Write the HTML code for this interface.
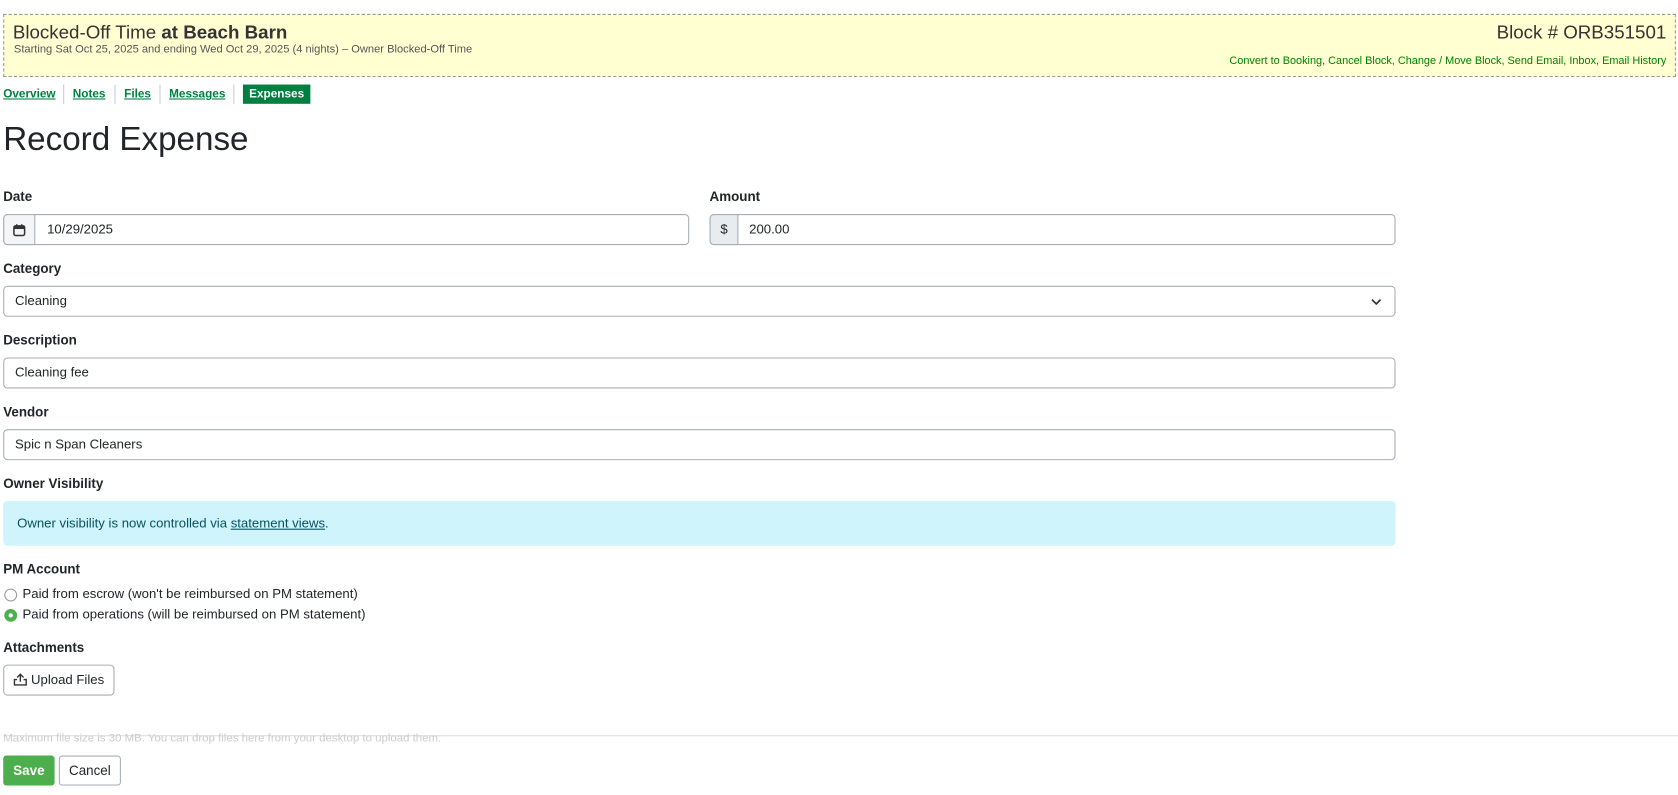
<!DOCTYPE html>
<html><head><meta charset="utf-8"><style>
html,body{margin:0;padding:0;background:#fff;overflow:hidden;width:1678px;height:795px}
#w{position:absolute;left:0;top:0;width:1568px;height:743px;transform:scale(1.0702);transform-origin:0 0;font-family:"Liberation Sans",Arial,sans-serif;color:#212529}
.a{position:absolute;white-space:nowrap}
.hdr{position:absolute;left:3px;top:13px;width:1561px;height:57px;background:#ffffd2;border:1px dashed #999}
.lbl{position:absolute;left:3px;font-size:12.5px;font-weight:bold;color:#212529}
.inp{position:absolute;box-sizing:border-box;border:1px solid #a7aeb8;border-radius:4px;background:#fff;font-size:12.3px;height:29px;line-height:27px;padding-left:10px}
.tab{position:absolute;top:82px;font-size:11px;font-weight:bold;color:#008040;text-decoration:underline}
.sep{position:absolute;top:79px;width:1px;height:18px;background:#ccc}
</style></head><body><div id="w">
<div class="hdr"></div>
<div class="a" style="left:12px;top:20px;font-size:17.5px;color:#333">Blocked-Off Time <b>at Beach Barn</b></div>
<div class="a" style="left:13px;top:41px;font-size:10.4px;color:#555">Starting Sat Oct 25, 2025 and ending Wed Oct 29, 2025 (4 nights) – Owner Blocked-Off Time</div>
<div class="a" style="right:11px;top:20px;font-size:17.5px;color:#333">Block # ORB351501</div>
<div class="a" style="right:11px;top:52px;font-size:10.2px;color:#008000">Convert to Booking, Cancel Block, Change / Move Block, Send Email, Inbox, Email History</div>
<div class="tab" style="left:3px">Overview</div><div class="sep" style="left:59px"></div>
<div class="tab" style="left:68px">Notes</div><div class="sep" style="left:107px"></div>
<div class="tab" style="left:116px">Files</div><div class="sep" style="left:149px"></div>
<div class="tab" style="left:158px">Messages</div><div class="sep" style="left:218px"></div>
<div class="a" style="left:227px;top:79px;width:63px;height:18px;background:#008040;color:#fff;font-size:11px;font-weight:bold;line-height:18px;text-align:center">Expenses</div>
<div class="a" style="left:3px;top:112px;font-size:31px;color:#212529">Record Expense</div>

<div class="lbl" style="top:177px">Date</div>
<div class="lbl" style="top:177px;left:663px">Amount</div>
<div class="inp" style="left:3px;top:200px;width:641px;padding-left:40px">10/29/2025</div>
<div class="a" style="left:3px;top:200px;width:30px;height:29px;box-sizing:border-box;border:1px solid #a7aeb8;border-radius:4px 0 0 4px;background:#f4f5f7">
<svg width="12" height="12" viewBox="0 0 12 12" style="position:absolute;left:8px;top:8px"><rect x="1" y="2" width="10" height="9" rx="1.5" fill="none" stroke="#333" stroke-width="1.4"/><rect x="1" y="2" width="10" height="3" fill="#333"/><rect x="3" y="0.5" width="1.3" height="2.5" fill="#333"/><rect x="7.7" y="0.5" width="1.3" height="2.5" fill="#333"/></svg></div>
<div class="inp" style="left:663px;top:200px;width:641px;padding-left:36px">200.00</div>
<div class="a" style="left:663px;top:200px;width:27px;height:29px;box-sizing:border-box;border:1px solid #a7aeb8;border-radius:4px 0 0 4px;background:#e9ecef;font-size:12.3px;line-height:27px;text-align:center">$</div>

<div class="lbl" style="top:244px">Category</div>
<div class="inp" style="left:3px;top:267px;width:1301px">Cleaning</div>
<svg class="a" style="left:1280px;top:277px" width="12" height="10" viewBox="0 0 12 10"><path d="M2 3l4 4 4-4" fill="none" stroke="#333" stroke-width="1.6"/></svg>
<div class="lbl" style="top:311px">Description</div>
<div class="inp" style="left:3px;top:334px;width:1301px">Cleaning fee</div>
<div class="lbl" style="top:378px">Vendor</div>
<div class="inp" style="left:3px;top:401px;width:1301px">Spic n Span Cleaners</div>
<div class="lbl" style="top:445px">Owner Visibility</div>
<div class="a" style="left:3px;top:468px;width:1301px;height:42px;background:#cff4fc;border-radius:4px"></div>
<div class="a" style="left:16px;top:482px;font-size:12.3px;color:#055160">Owner visibility is now controlled via <span style="text-decoration:underline">statement views</span>.</div>
<div class="lbl" style="top:525px">PM Account</div>
<div class="a" style="left:4px;top:550px;width:10px;height:10px;border:1px solid #999;border-radius:50%"></div>
<div class="a" style="left:21px;top:548px;font-size:12.3px">Paid from escrow (won't be reimbursed on PM statement)</div>
<div class="a" style="left:4px;top:569px;width:4px;height:4px;border:4px solid #4caf50;border-radius:50%;background:#fff"></div>
<div class="a" style="left:21px;top:567px;font-size:12.3px">Paid from operations (will be reimbursed on PM statement)</div>
<div class="lbl" style="top:598px">Attachments</div>
<div class="a" style="left:3px;top:621px;width:104px;height:29px;box-sizing:border-box;border:1px solid #a7aeb8;border-radius:4px;background:#fff;font-size:12.3px;line-height:27px;padding-left:25px">Upload Files</div>
<svg class="a" style="left:12px;top:628px" width="14" height="14" viewBox="0 0 14 14"><path d="M7 9V2M4 5l3-3 3 3M4 7H1.5v5h11V7H10" fill="none" stroke="#333" stroke-width="1.3"/></svg>
<div class="a" style="left:3px;top:687px;width:1565px;height:1px;background:#ddd"></div>
<div class="a" style="left:3px;top:684px;font-size:10.7px;color:#ccc">Maximum file size is 30 MB. You can drop files here from your desktop to upload them.</div>
<div class="a" style="left:3px;top:706px;width:48px;height:28px;background:#4cae4c;border-radius:3px;color:#fff;font-size:12.5px;font-weight:bold;line-height:28px;text-align:center">Save</div>
<div class="a" style="left:55px;top:706px;width:58px;height:28px;box-sizing:border-box;border:1px solid #a7aeb8;border-radius:3px;font-size:12.5px;line-height:26px;text-align:center">Cancel</div>
</div></body></html>
